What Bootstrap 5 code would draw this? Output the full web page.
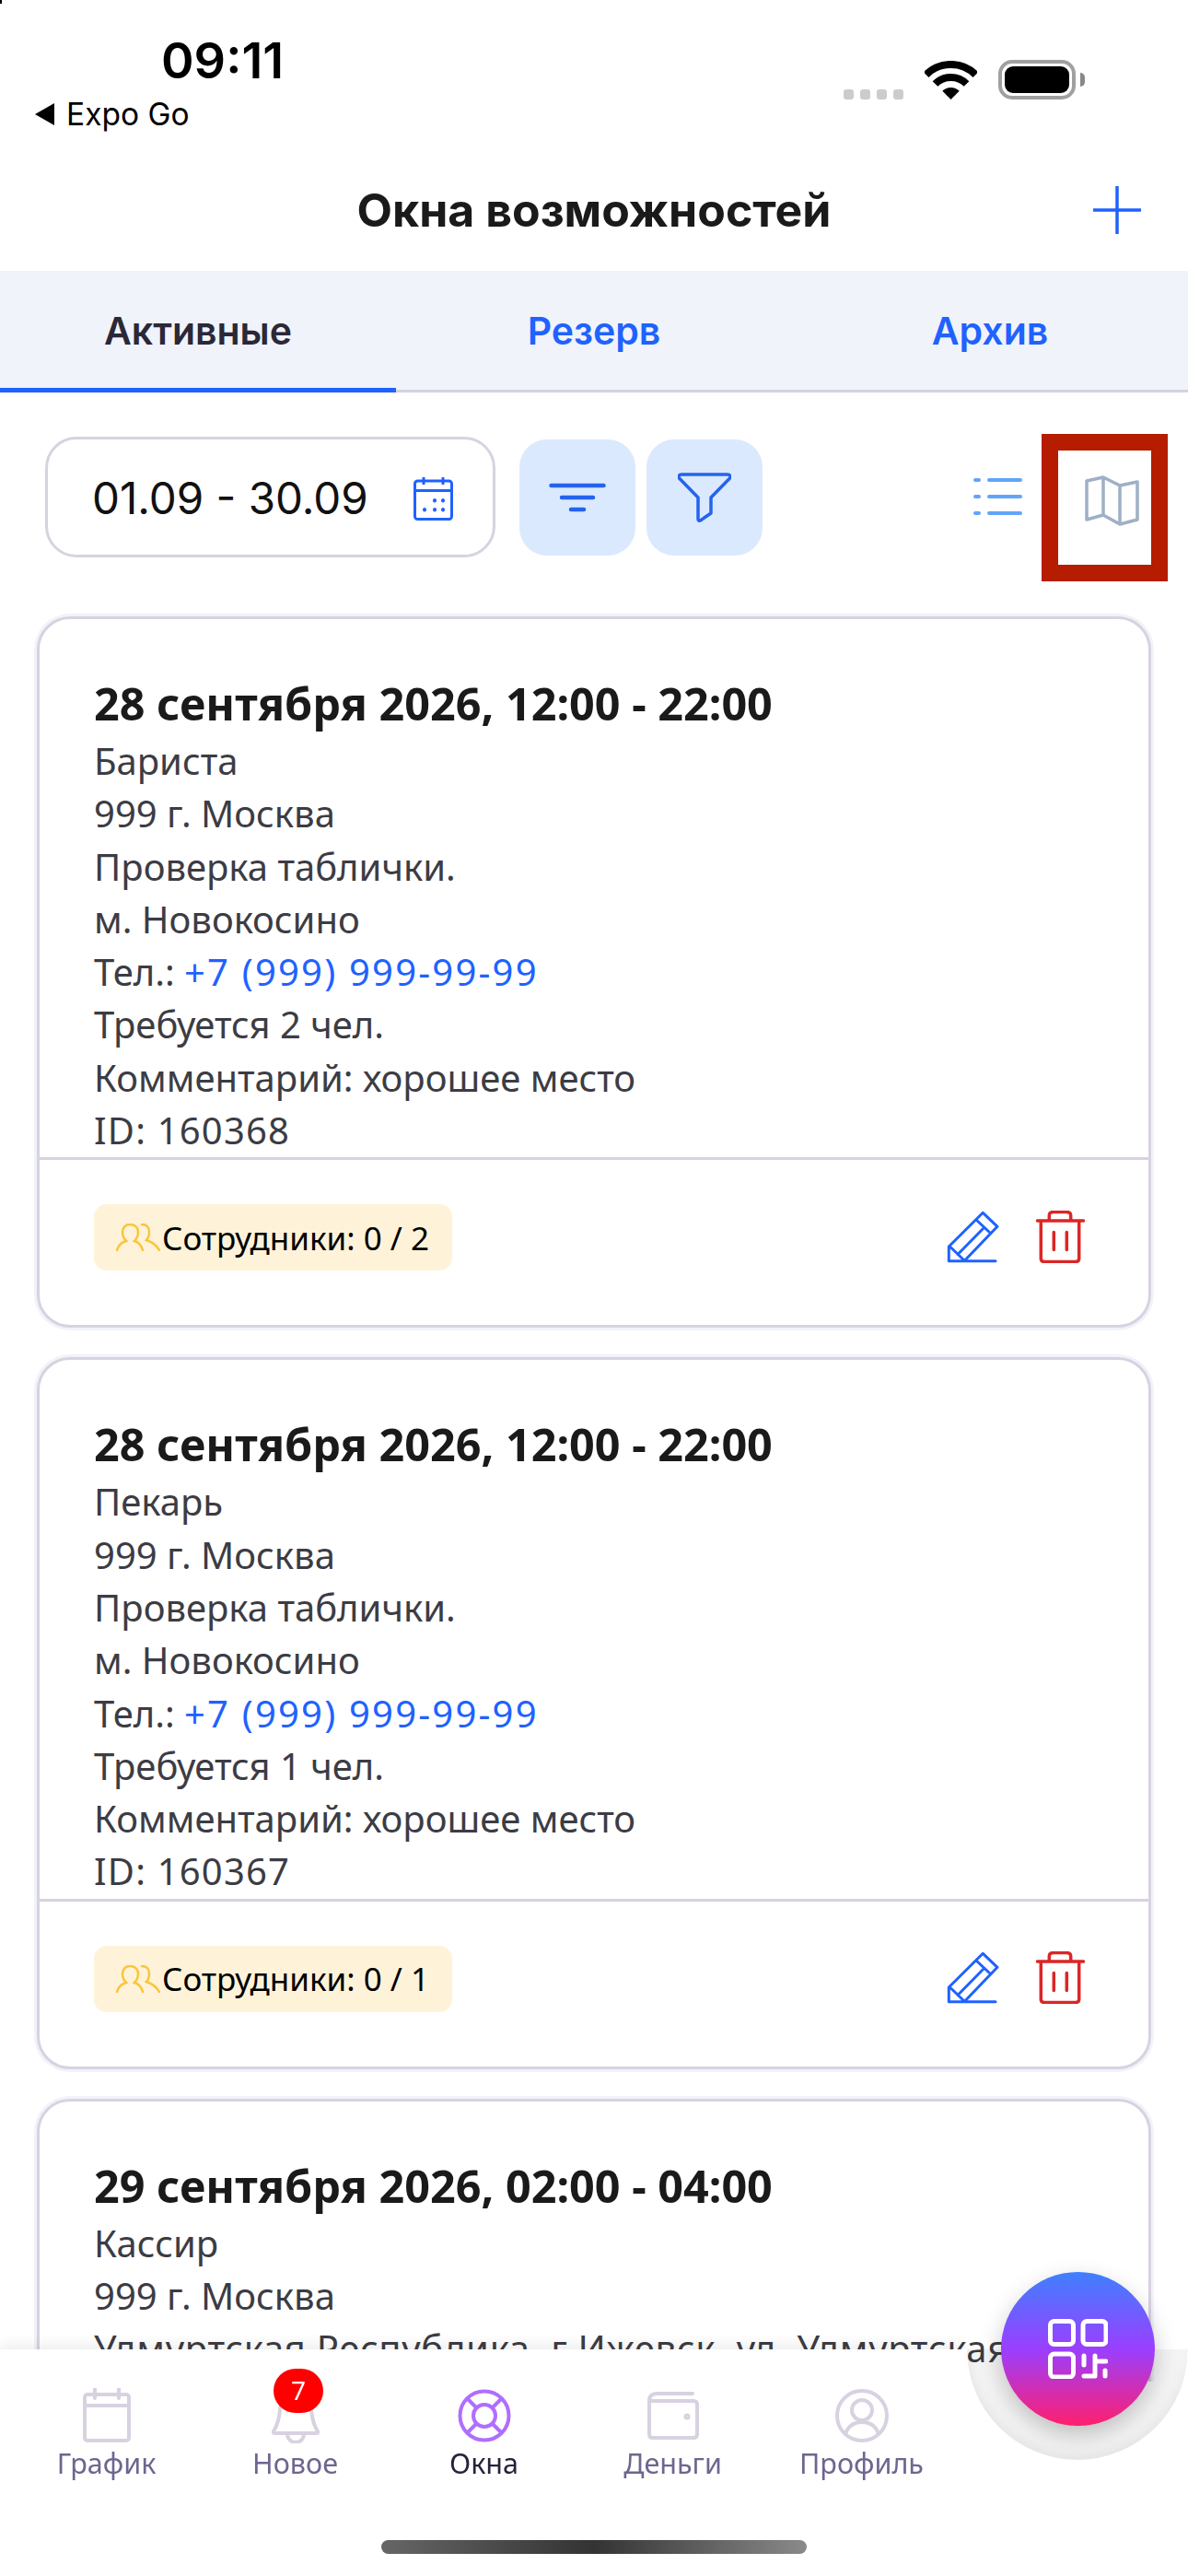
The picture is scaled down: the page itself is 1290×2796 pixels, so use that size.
<!DOCTYPE html>
<html lang="ru">

<head>
    <meta charset="UTF-8">
    <meta name="viewport" content="width=device-width, initial-scale=1.0">
    <title>Окна возможностей</title>
    <!-- Bootstrap CSS -->
    <link href="https://cdn.jsdelivr.net/npm/bootstrap@5.3.0/dist/css/bootstrap.min.css" rel="stylesheet">
    <style>
        body { background: #fff; font-family: "Noto Sans", sans-serif; }
        .screen { width: 1290px; height: 2796px; position: relative; overflow: hidden; background: #fff; }
        .screen::before { content: ""; position: absolute; left: 0; top: 0; width: 2px; height: 4px; background: #000; }
        .sf { font-family: Inter, "Liberation Sans", sans-serif; }

        .status-row { height: 165px; }
        .time-text { font-size: 54px; font-weight: 600; line-height: 64px; margin: 34px 0 0 175px; color: #000; }
        .expo-text { font-size: 33.5px; line-height: 40px; margin: 6px 0 0 38px; color: #000; gap: 13px; }
        .expo-arrow { width: 0; height: 0; border-top: 12px solid transparent; border-bottom: 12px solid transparent; border-right: 21px solid #000; }
        .sys-icons { padding: 65px 122px 0 0; gap: 23px; align-items: flex-end; height: 108px; }
        .sig-dots { gap: 7px; }
        .sig-dots span { width: 11px; height: 11px; border-radius: 3px; background: #ccc; }
        .batt { width: 84px; height: 43px; border: 4px solid #a0a0a0; border-radius: 15px; padding: 3px; position: relative; }
        .batt span { display: block; height: 100%; background: #000; border-radius: 9px; }
        .batt::after { content: ""; position: absolute; right: -14px; top: 10px; width: 5px; height: 15px; background: #888; border-radius: 0 5px 5px 0; }

        .title-bar { height: 129px; padding-bottom: 3px; display: grid; grid-template-columns: 1fr auto 1fr; align-items: center; }
        .title-bar h1 { font-size: 50px; font-weight: 700; margin: 0; color: #1a1a1a; }
        .plus-btn { justify-self: end; margin-right: 51px; line-height: 0; }

        .tab-strip { height: 132px; background: #f0f3f9; border-bottom: 3px solid #d6d0df; }
        .tab-strip .nav-link { height: 132px; line-height: 130px; padding: 0; font-size: 41px; font-weight: 600; color: #1f62ff; margin-bottom: -3px; }
        .tab-strip .nav-link.active { color: #2b2838; border-bottom: 5px solid #1f62ff; }

        .tool-row { padding: 48px 53px 61px 49px; height: 240px; align-items: flex-start; }
        .date-box { width: 489px; height: 131px; border: 3px solid #d8d2e0; border-radius: 34px; padding: 2px 43px 0 48px; font-size: 47.5px; color: #111; }
        .soft-btn { width: 126px; height: 126px; margin-top: 3px; border: 0; border-radius: 30px; background: #dbe9fe; padding: 0; }
        .sort-btn { margin-left: 26px; }
        .funnel-btn { margin-left: 12px; }
        .view-icon { margin-top: 45px; line-height: 0; }
        .map-wrap { position: relative; margin-left: 68px; margin-top: 41px; line-height: 0; }
        .red-mark { position: absolute; left: -47px; top: -44px; width: 137px; height: 160px; border: 18px solid #b51c00; }

        .job-list { height: 1919px; overflow: hidden; padding: 3px 40px 0; }
        .job-card { --bs-card-border-color: #d8d2e0; --bs-card-border-width: 3px; --bs-card-border-radius: 36px; --bs-card-inner-border-radius: 33px; box-shadow: 0 0 0 3px #f0f3f9; margin-bottom: 32px; width: 1210px; font-size: 40px; line-height: 57.3px; color: #3c3c44; }
        .job-card:last-child { min-height: 400px; }
        .job-card .card-body { padding: 58px 40px 1px 59px; flex: none; }
        .job-title { font-size: 48.5px; font-weight: 700; line-height: 67px; color: #1a1a1a; }
        .job-card a { color: #1f62ff; text-decoration: none; letter-spacing: 2.2px; }
        .id-line { letter-spacing: 1.2px; }
        .addr-line { letter-spacing: .7px; white-space: nowrap; }
        .job-card .card-footer { height: 182px; padding: 0 69px 11px 59px; background: transparent; border-top: 3px solid #d8d2e0; }
        .staff-tag { height: 72px; width: 389px; background: #fef3d9; border-radius: 14px; padding-left: 24px; font-size: 35px; color: #000; gap: 2px; }
        .act-icons { gap: 40px; margin-bottom: 2px; }

        .tabbar-wrap { position: absolute; left: 0; top: 2550px; width: 1290px; height: 246px; filter: drop-shadow(0 -5px 7px rgba(0, 0, 0, .07)); }
        .tabbar { height: 246px; background: #fff; clip-path: path('M0 0 H1050 A120 120 0 0 0 1290 0 V246 H0 Z'); padding: 0 0 0 13px; }
        .tab-item { width: 205px; padding-top: 42px; text-align: center; font-size: 30.5px; line-height: 38px; color: #6f6590; position: relative; }
        .tab-item svg { display: block; margin: 0 auto 2px; }
        .tab-item.current { color: #26233a; }
        .note-badge { position: absolute; left: 79px; top: 21px; width: 54px; height: 48px; border-radius: 24px; background: #f00; color: #fff; font-size: 28px; line-height: 46px; }
        .fab-halo { position: absolute; left: 1050px; top: 2550px; width: 240px; height: 120px; border-radius: 0 0 120px 120px; background: rgba(0, 0, 0, .045); }
        .fab-btn { position: absolute; left: 1087px; top: 2466px; width: 167px; height: 167px; border: 0; padding: 0; border-radius: 50%; background: linear-gradient(180deg, #3f80ff 0%, #9a3fff 50%, #ff1f6e 100%); box-shadow: 0 10px 26px rgba(0, 0, 0, .22); }
        .home-bar { position: absolute; left: 414px; top: 2757px; width: 462px; height: 15px; border-radius: 8px; background: linear-gradient(90deg, #666, #333 50%, #8a8a8a); }
    </style>
</head>

<body>
    <div class="screen">
        <!-- Статус бар -->
        <div class="status-row d-flex justify-content-between">
            <div>
                <div class="time-text sf">09:11</div>
                <div class="expo-text sf d-flex align-items-center"><span class="expo-arrow"></span>Expo Go</div>
            </div>
            <div class="sys-icons d-flex">
                <div class="sig-dots d-flex"><span></span><span></span><span></span><span></span></div>
                <svg width="57" height="42" viewBox="0 0 57 42">
                    <path d="M1.6 15.1A38 38 0 0 1 55.4 15.1M11.5 25A24 24 0 0 1 45.5 25" fill="none" stroke="#000" stroke-width="8" />
                    <path d="M28.5 42L19.3 32.8A13 13 0 0 1 37.7 32.8Z" />
                </svg>
                <div class="batt"><span></span></div>
            </div>
        </div>

        <!-- Заголовок -->
        <div class="title-bar">
            <div></div>
            <h1 class="sf">Окна возможностей</h1>
            <div class="plus-btn">
                <svg width="52" height="52" viewBox="0 0 52 52">
                    <path d="M26 0V52M0 26H52" stroke="#1f62ff" stroke-width="3.5" stroke-linecap="round" />
                </svg>
            </div>
        </div>

        <!-- Вкладки -->
        <nav class="nav nav-justified tab-strip sf">
            <a class="nav-link active" href="#">Активные</a>
            <a class="nav-link" href="#">Резерв</a>
            <a class="nav-link" href="#">Архив</a>
        </nav>

        <!-- Фильтры -->
        <div class="tool-row d-flex">
            <div class="date-box sf d-flex align-items-center justify-content-between">
                <span>01.09 - 30.09</span>
                <svg width="43" height="48" viewBox="0 0 43 48" fill="none" stroke="#1f62ff" stroke-width="3">
                    <rect x="1.5" y="5" width="40" height="41.5" rx="3" />
                    <path d="M1.5 15.500H41.500M11 1V9M32 1V9" />
                    <path d="M23 26v.5M32 26v.5M12 36v.5M23 36v.5M32 36v.5" stroke-linecap="round" stroke-width="4" />
                </svg>
            </div>
            <button class="soft-btn sort-btn d-flex align-items-center justify-content-center" type="button">
                <svg width="62" height="32" viewBox="0 0 62 32" fill="none" stroke="#2563eb" stroke-width="4.500" stroke-linecap="round">
                    <path d="M2.500 3H59.500M14 16H48M24 29H38" />
                </svg>
            </button>
            <button class="soft-btn funnel-btn d-flex align-items-center justify-content-center" type="button">
                <svg width="58" height="54" viewBox="0 0 58 54" fill="none" stroke="#2563eb" stroke-width="3.500" stroke-linejoin="round">
                    <path d="M4 2H54Q58 2 56.500 6L36 27V44L24.500 52Q22 53 22 50V27L1.500 6Q0 2 4 2Z" />
                </svg>
            </button>
            <div class="ms-auto view-icon">
                <svg width="53" height="40" viewBox="0 0 53 40" fill="none" stroke="#60a5fa" stroke-width="4" stroke-linecap="round">
                    <path d="M2 2H6M17 2H51M2 20H6M17 20H51M2 38H6M17 38H51" />
                </svg>
            </div>
            <div class="map-wrap">
                <span class="red-mark"></span>
                <svg width="59" height="56" viewBox="0 0 59 56" fill="none" stroke="#9fb0c6" stroke-width="3.500" stroke-linejoin="round">
                    <path d="M2 7L20 3L38 12L57 8V49L38 54L20 44L2 49ZM20 3V44M38 12V54" />
                </svg>
            </div>
        </div>

        <!-- Список окон -->
        <div class="job-list">
            <div class="card job-card">
                <div class="card-body">
                    <div class="job-title">28 сентября 2026, 12:00 - 22:00</div>
                    <div>Бариста</div>
                    <div>999 г. Москва</div>
                    <div>Проверка таблички.</div>
                    <div>м. Новокосино</div>
                    <div>Тел.: <a href="#">+7 (999) 999-99-99</a></div>
                    <div>Требуется 2 чел.</div>
                    <div>Комментарий: хорошее место</div>
                    <div class="id-line">ID: 160368</div>
                </div>
                <div class="card-footer d-flex align-items-center justify-content-between">
                    <div class="staff-tag d-flex align-items-center">
                        <svg width="48" height="30" viewBox="0 0 48 30" fill="none" stroke="#fbc43a" stroke-width="2.500" stroke-linecap="round">
                            <path d="M1 29C3 22 7 20 11 19C8 16 7 12 7 9C7 4 11 1 15 1C20 1 24 4 24 9C24 12 23 16 20 19C24 20 27 22 29 29" />
                            <path d="M28 1C33 1 36 4 36 9C36 12 35 16 33 18C38 20 43 22 47 29" />
                        </svg>
                        <span>Сотрудники: 0 / 2</span>
                    </div>
                    <div class="act-icons d-flex align-items-center">
                        <svg width="57" height="57" viewBox="0 0 57 57" fill="none" stroke="#1f62ff" stroke-width="3" stroke-linecap="round" stroke-linejoin="round">
                            <path d="M2.300 54.700V39L39.300 2.300L55 17.300L19 54.700H2.300ZM32 10L47 24M4.500 40L19 54M12 47.500L39.500 19.500M19 54.700H53" />
                        </svg>
                        <svg width="53" height="57" viewBox="0 0 53 57" fill="none" stroke="#dc2626" stroke-width="3.500" stroke-linecap="round" stroke-linejoin="round">
                            <path d="M1.500 11H51.500M14.300 10V5.500Q14.300 1.500 19 1.500H33Q37.700 1.500 37.700 5.500V10M5.300 11V52Q5.300 55.500 9 55.500H43Q46.700 55.500 46.700 52V11M19.300 23.500V42.500M33.300 23.500V42.500" />
                        </svg>
                    </div>
                </div>
            </div>

            <div class="card job-card">
                <div class="card-body">
                    <div class="job-title">28 сентября 2026, 12:00 - 22:00</div>
                    <div>Пекарь</div>
                    <div>999 г. Москва</div>
                    <div>Проверка таблички.</div>
                    <div>м. Новокосино</div>
                    <div>Тел.: <a href="#">+7 (999) 999-99-99</a></div>
                    <div>Требуется 1 чел.</div>
                    <div>Комментарий: хорошее место</div>
                    <div class="id-line">ID: 160367</div>
                </div>
                <div class="card-footer d-flex align-items-center justify-content-between">
                    <div class="staff-tag d-flex align-items-center">
                        <svg width="48" height="30" viewBox="0 0 48 30" fill="none" stroke="#fbc43a" stroke-width="2.500" stroke-linecap="round">
                            <path d="M1 29C3 22 7 20 11 19C8 16 7 12 7 9C7 4 11 1 15 1C20 1 24 4 24 9C24 12 23 16 20 19C24 20 27 22 29 29" />
                            <path d="M28 1C33 1 36 4 36 9C36 12 35 16 33 18C38 20 43 22 47 29" />
                        </svg>
                        <span>Сотрудники: 0 / 1</span>
                    </div>
                    <div class="act-icons d-flex align-items-center">
                        <svg width="57" height="57" viewBox="0 0 57 57" fill="none" stroke="#1f62ff" stroke-width="3" stroke-linecap="round" stroke-linejoin="round">
                            <path d="M2.300 54.700V39L39.300 2.300L55 17.300L19 54.700H2.300ZM32 10L47 24M4.500 40L19 54M12 47.500L39.500 19.500M19 54.700H53" />
                        </svg>
                        <svg width="53" height="57" viewBox="0 0 53 57" fill="none" stroke="#dc2626" stroke-width="3.500" stroke-linecap="round" stroke-linejoin="round">
                            <path d="M1.500 11H51.500M14.300 10V5.500Q14.300 1.500 19 1.500H33Q37.700 1.500 37.700 5.500V10M5.300 11V52Q5.300 55.500 9 55.500H43Q46.700 55.500 46.700 52V11M19.300 23.500V42.500M33.300 23.500V42.500" />
                        </svg>
                    </div>
                </div>
            </div>

            <div class="card job-card">
                <div class="card-body">
                    <div class="job-title">29 сентября 2026, 02:00 - 04:00</div>
                    <div>Кассир</div>
                    <div>999 г. Москва</div>
                    <div class="addr-line">Удмуртская Республика, г Ижевск, ул. Удмуртская</div>
                </div>
            </div>
        </div>

        <!-- Нижнее меню -->
        <div class="fab-halo"></div>
        <div class="tabbar-wrap">
            <div class="tabbar d-flex">
                <div class="tab-item">
                    <svg width="52" height="60" viewBox="0 0 52 60" fill="none" stroke="#d8d2e0" stroke-width="4" stroke-linecap="round" stroke-linejoin="round">
                        <rect x="2" y="7" width="48" height="50" rx="3" />
                        <path d="M2 19H50M13 1V11M39 1V11" />
                    </svg>
                    График
                </div>
                <div class="tab-item">
                    <svg width="52" height="60" viewBox="0 0 52 60" fill="none" stroke="#d8d2e0" stroke-width="4" stroke-linecap="round" stroke-linejoin="round">
                        <path d="M26 3C14 3 10 12 9 24C8 34 6 41 2 47Q1 49 4 49H48Q51 49 50 47C46 41 44 34 43 24C42 12 38 3 26 3Z" />
                        <path d="M17 50A9 9 0 0 0 35 50" />
                    </svg>
                    Новое
                    <span class="note-badge">7</span>
                </div>
                <div class="tab-item current">
                    <svg width="58" height="60" viewBox="0 0 58 60" fill="none" stroke="#b06eff" stroke-width="4">
                        <circle cx="29" cy="30" r="26.500" />
                        <circle cx="29" cy="30" r="12" />
                        <path d="M10 11L20 21M48 11L38 21M10 49L20 39M48 49L38 39" />
                    </svg>
                    Окна
                </div>
                <div class="tab-item">
                    <svg width="58" height="60" viewBox="0 0 58 60" fill="none" stroke="#d8d2e0" stroke-width="4" stroke-linecap="round" stroke-linejoin="round">
                        <path d="M3 14Q3 6 11 6H50M3 14V50Q3 54 7 54H51Q55 54 55 50V18Q55 14 51 14H3" />
                        <circle cx="44" cy="31" r="1.500" />
                    </svg>
                    Деньги
                </div>
                <div class="tab-item">
                    <svg width="58" height="60" viewBox="0 0 58 60" fill="none" stroke="#d8d2e0" stroke-width="4" stroke-linecap="round">
                        <circle cx="29" cy="30" r="27" />
                        <circle cx="29" cy="24" r="11" />
                        <path d="M11 50C14 41 21 37 29 37C37 37 44 41 47 50" />
                    </svg>
                    Профиль
                </div>
            </div>
        </div>

        <button class="fab-btn d-flex align-items-center justify-content-center" type="button">
            <svg width="65" height="65" viewBox="0 0 65 65" fill="none" stroke="#fff" stroke-width="5" stroke-linecap="round" stroke-linejoin="round">
                <rect x="2.500" y="2.500" width="25" height="25" rx="4" />
                <rect x="38" y="2.500" width="25" height="25" rx="4" />
                <rect x="2.500" y="38" width="25" height="25" rx="4" />
                <path d="M39 40V50M51 40V62H39M51 46H63M62 56V62" />
            </svg>
        </button>
        <div class="home-bar"></div>
    </div>

    <!-- Bootstrap JS -->
    <script src="https://cdn.jsdelivr.net/npm/bootstrap@5.3.0/dist/js/bootstrap.bundle.min.js"></script>
</body>

</html>
